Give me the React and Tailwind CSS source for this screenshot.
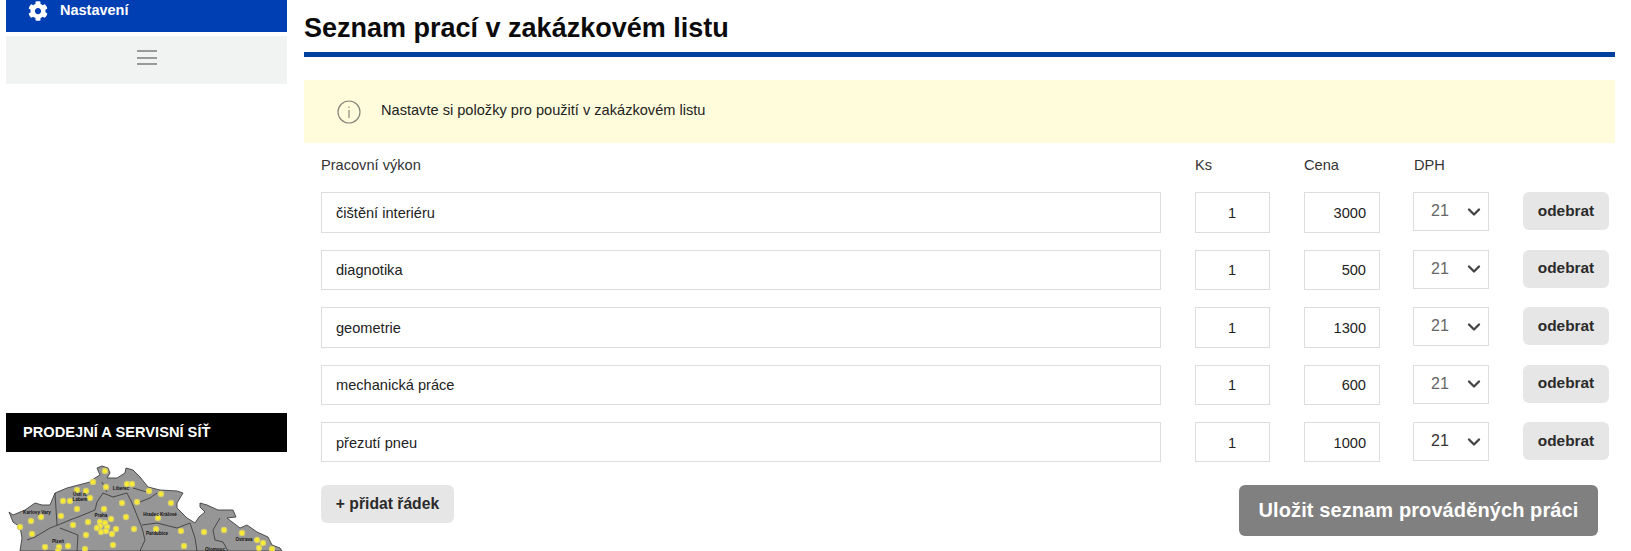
import React from "react";
import { ChevronDown } from "lucide-react";
import { FaCog } from "react-icons/fa";

const ROWS = [
  { name: "čištění interiéru", price: "3000", h: "h-[41px]", dph: "text-[#666]" },
  { name: "diagnotika", price: "500", h: "h-[40px]", dph: "text-[#666]" },
  { name: "geometrie", price: "1300", h: "h-[41px]", dph: "text-[#666]" },
  { name: "mechanická práce", price: "600", h: "h-[40px]", dph: "text-[#666]" },
  { name: "přezutí pneu", price: "1000", h: "h-[40px]", dph: "text-[#333]" },
];

const DOTS = [
  [105, 471], [93, 482], [106, 487], [127, 484], [132, 484], [77, 490], [86, 491], [63, 501], [70, 501], [90, 498], [77, 509], [104, 509],
  [122, 503], [137, 502], [149, 491], [41, 517], [31, 521], [20, 527], [32, 534], [61, 516], [73, 525], [88, 522], [111, 519], [126, 517],
  [134, 529], [116, 529], [112, 534], [86, 535], [113, 545], [45, 547], [59, 547], [68, 546], [85, 549], [100, 522], [105, 523], [107, 527],
  [100, 526], [97, 528], [101, 532], [106, 531], [58, 551], [161, 494], [171, 503], [158, 518], [156, 529], [181, 531], [184, 546], [204, 532],
  [224, 530], [242, 533], [257, 540], [263, 543], [259, 548], [272, 549],
];

const CITIES = [
  ["Karlovy Vary", 37, 514],
  ["Ústí n.", 80, 496],
  ["Labem", 80, 501],
  ["Liberec", 121, 490],
  ["Praha", 101, 517],
  ["Plzeň", 58, 543],
  ["Hradec Králové", 160, 516],
  ["Pardubice", 157, 535],
  ["Ostrava", 244, 541],
  ["Olomouc", 215, 551],
];

function CzechMap() {
  return (
    <svg width="281" height="99" viewBox="6 452 281 99" className="block">
      <path
        d="M9 512 L13 515 L25 510 L35 503 L42 505 L50 505 L55 493 L67 488 L90 482 L95 478 L100 475 L97 468 L102 466 L108 468 L110 473 L107 478 L117 478 L125 473 L126 468 L133 470 L140 477 L148 487 L160 490 L177 491 L183 493 L177 503 L177 508 L187 518 L195 523 L199 517 L205 512 L200 507 L200 503 L207 505 L218 510 L233 510 L236 517 L227 518 L240 528 L247 525 L257 532 L268 537 L272 545 L280 548 L282 551 L20 551 L22 538 L20 527 L13 522 Z"
        fill="#969696"
        stroke="#3f3f3f"
        strokeWidth="0.9"
      />
      <path
        d="M55 493 L57 525 M27 540 L35 537 L50 528 L58 525 L70 520 L83 515 L95 510 L97 502 L103 493 L113 497 L127 493 L132 503 L142 528 L145 540 L140 551 M60 528 L78 535 L77 551 M102 482 L107 492 M133 488 L150 493 M140 502 L150 498 L157 493 M142 525 L157 523 L177 528 L190 523 L195 538 L197 551 M220 518 L213 530 L215 540 L223 542 L228 551"
        fill="none"
        stroke="#333"
        strokeWidth="0.8"
      />
      {DOTS.map(([x, y], i) => (
        <g key={i}>
          <circle cx={x} cy={y} r="3.2" fill="#d8cf6a" />
          <circle cx={x} cy={y} r="2" fill="#fbec2e" />
        </g>
      ))}
      {CITIES.map(([name, x, y]) => (
        <text key={name} x={x} y={y} textAnchor="middle" fontSize="4.6" fontWeight="700" fill="#111">
          {name}
        </text>
      ))}
    </svg>
  );
}

function Sidebar() {
  return (
    <aside className="w-[281px] ml-[6px] shrink-0 flex flex-col">
      <div className="h-[32px] bg-[#003eb3] flex items-center pl-[22px] pb-[11px] text-white text-[14.5px] font-bold">
        <FaCog size={20} className="shrink-0" />
        <span className="ml-[12px]">Nastavení</span>
      </div>
      <div className="mt-[4px] h-[48px] bg-[#f1f2f2] flex items-center justify-center pb-[5px]">
        <div className="w-[20px] flex flex-col gap-[4.5px]">
          <div className="h-[2px] bg-[#999]" />
          <div className="h-[2px] bg-[#999]" />
          <div className="h-[2px] bg-[#999]" />
        </div>
      </div>
      <div className="mt-[329px] h-[39px] bg-black text-white flex items-center pl-[17px] text-[14.65px] font-bold">
        PRODEJNÍ A SERVISNÍ SÍŤ
      </div>
      <CzechMap />
    </aside>
  );
}

function Row({ row }) {
  const box = "border border-[#ddd] bg-white text-[14.6px] text-[#222] flex items-center pt-[3px]";
  return (
    <div className="flex items-start h-[57.5px]">
      <div className={`${box} ${row.h} w-[840px] pl-[14px]`}>{row.name}</div>
      <div className={`${box} ${row.h} w-[75px] ml-[34px] pl-[32px]`}>1</div>
      <div className={`${box} ${row.h} w-[76px] ml-[34px] justify-end pr-[13px]`}>{row.price}</div>
      <div className={`border border-[#ddd] bg-white h-[39px] w-[76px] ml-[33px] flex items-center pl-[17px] pb-[1px] text-[16px] ${row.dph}`}>
        <span>21</span>
        <ChevronDown size={20} strokeWidth={2.8} className="ml-[15px] mt-[1px] text-[#444]" />
      </div>
      <button className="w-[86px] h-[38px] ml-[34px] rounded-[6px] bg-[#e6e6e6] text-[15.4px] font-bold text-[#2b2b2b] pb-[1px]">
        odebrat
      </button>
    </div>
  );
}

export default function App() {
  return (
    <div className="w-[1631px] h-[551px] overflow-hidden bg-white flex font-['Liberation_Sans',Arial,sans-serif]">
      <Sidebar />
      <main className="ml-[17px] w-[1311px] shrink-0">
        <h1 className="h-[52px] pt-[13px] text-[27px] leading-[30px] font-bold text-[#0b0b0b]">Seznam prací v zakázkovém listu</h1>
        <div className="h-[5px] bg-[#00409f]" />
        <div className="mt-[23px] h-[63px] bg-[#fffcdb] flex items-center pl-[33px] text-[14.6px] text-[#222]">
          <svg width="24" height="24" viewBox="0 0 24 24" fill="none" stroke="#85857a" strokeWidth="1.2" className="shrink-0">
            <circle cx="12" cy="12" r="11" />
            <path d="M12 10v8" />
            <path d="M12 6.5v1.5" />
          </svg>
          <span className="ml-[20px] mb-[1px]">Nastavte si položky pro použití v zakázkovém listu</span>
        </div>
        <div className="ml-[17px]">
          <div className="h-[49px] flex items-center text-[14.6px] text-[#333] pb-[4px]">
            <span className="w-[874px]">Pracovní výkon</span>
            <span className="w-[109px]">Ks</span>
            <span className="w-[110px]">Cena</span>
            <span>DPH</span>
          </div>
          {ROWS.map((r) => (
            <Row key={r.name} row={r} />
          ))}
          <div className="flex items-start justify-between mt-[5px]">
            <button className="w-[133px] h-[38px] rounded-[6px] bg-[#e6e6e6] text-[15.7px] font-bold text-[#2b2b2b]">
              + přidat řádek
            </button>
            <button className="w-[359px] h-[51px] mr-[17px] rounded-[6px] bg-[#808080] text-white text-[20px] font-bold tracking-[0.1px]">
              Uložit seznam prováděných práci
            </button>
          </div>
        </div>
      </main>
    </div>
  );
}
